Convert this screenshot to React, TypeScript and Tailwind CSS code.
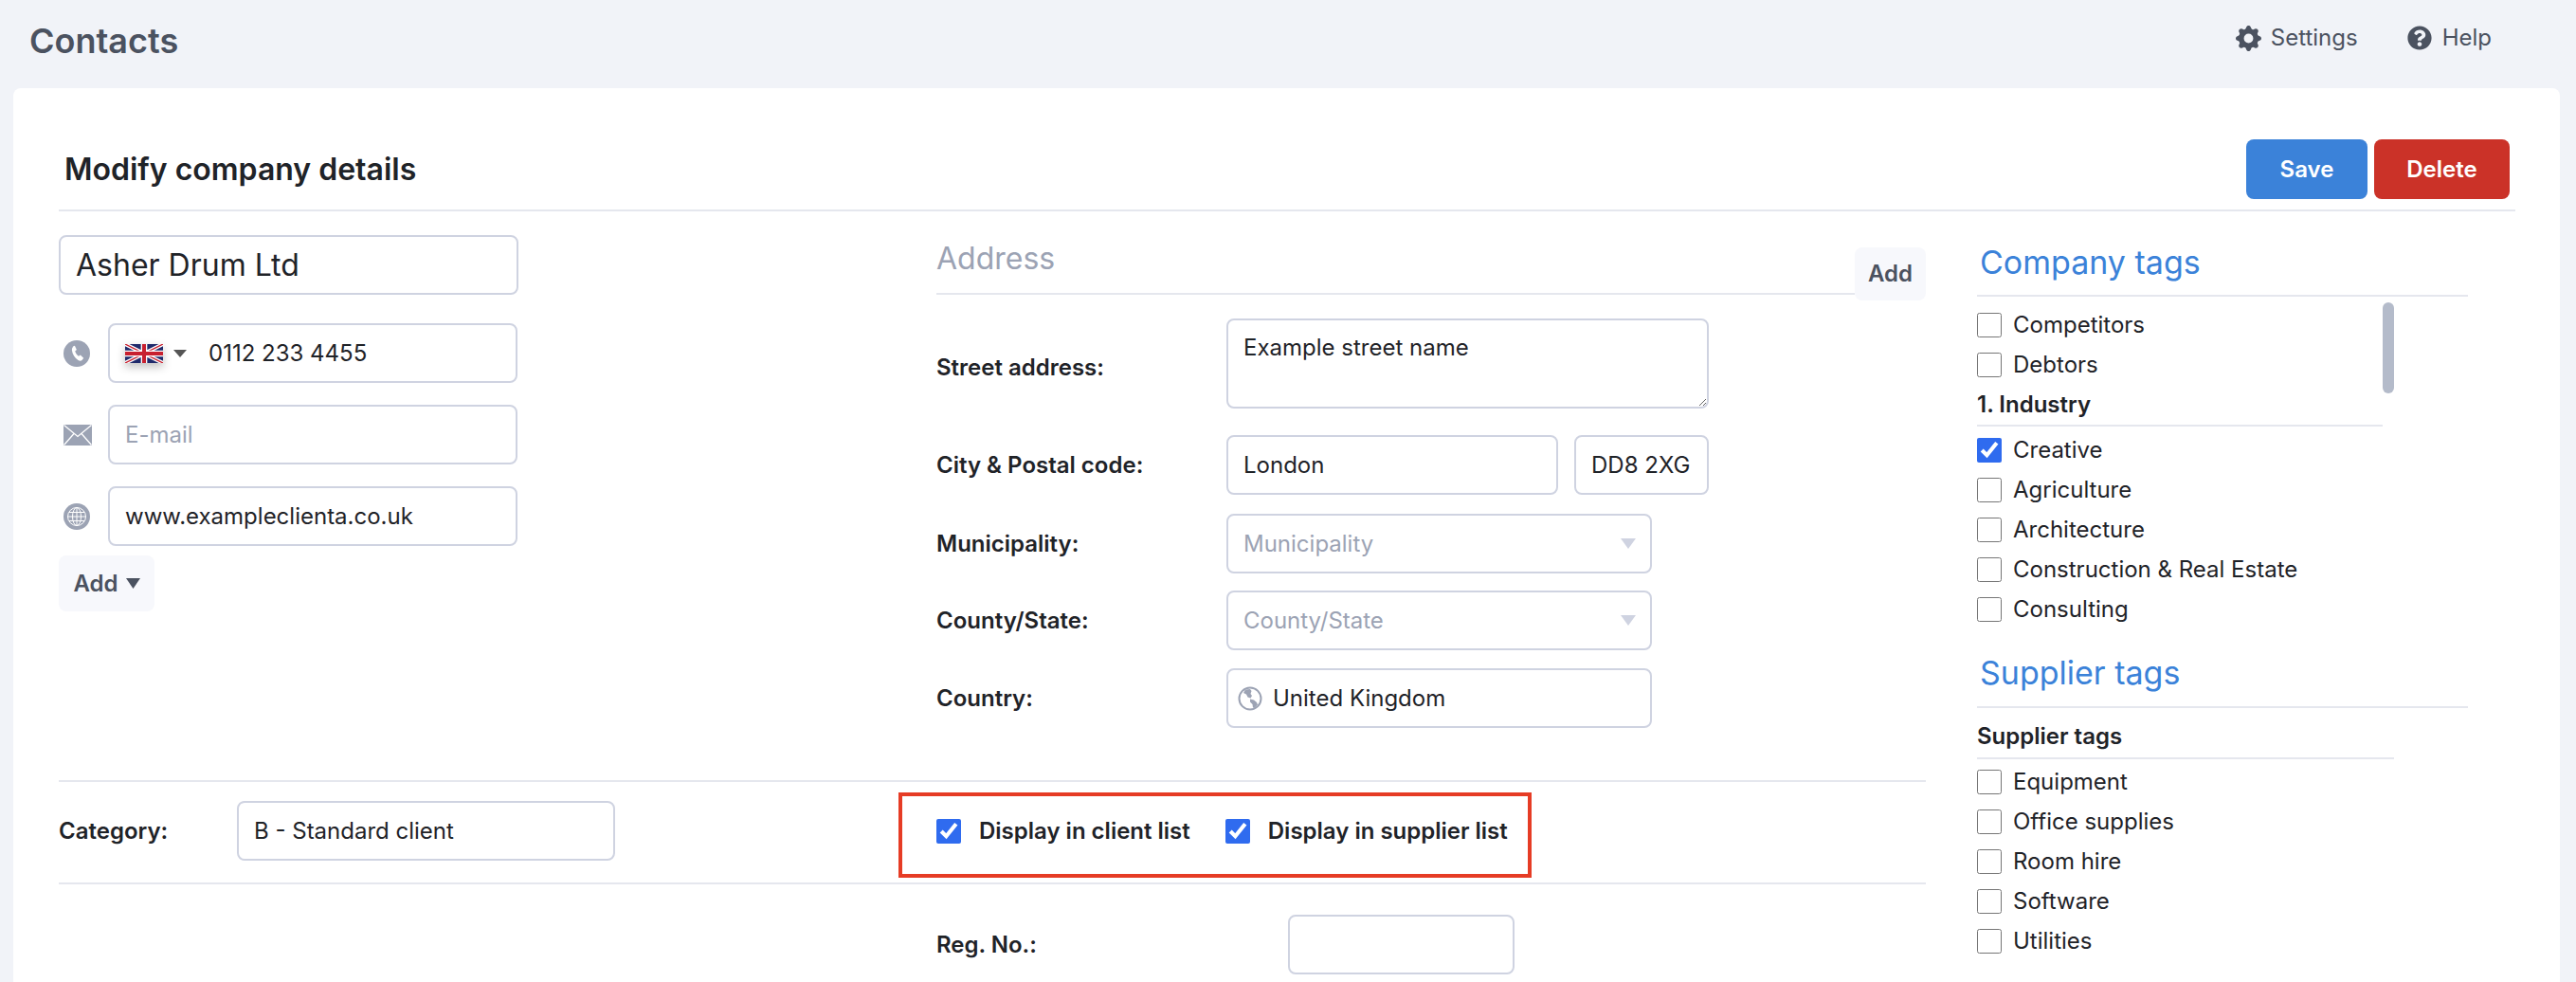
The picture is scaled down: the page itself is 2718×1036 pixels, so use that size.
import type { ReactNode } from "react";
import { BsGearFill } from "react-icons/bs";
import { FaQuestionCircle } from "react-icons/fa";

const INPUT =
  "h-[63px] rounded-[8px] border-2 border-[#cfd3e1] bg-white px-[16px] text-[24px] text-[#1f2328] outline-none placeholder:text-[#9ca3b4]";
const LABEL = "text-[24px] font-semibold text-[#1f2328]";

function UkFlag() {
  return (
    <svg viewBox="0 0 60 30" preserveAspectRatio="none" className="h-[20px] w-[40px] shadow-[0_4px_10px_rgba(0,0,0,0.25)]">
      <rect width="60" height="30" fill="#1f2a6b" />
      <path d="M0 0L60 30M60 0L0 30" stroke="#fff" strokeWidth="6" />
      <path d="M0 0L60 30M60 0L0 30" stroke="#c8202f" strokeWidth="2" />
      <path d="M30 0V30M0 15H60" stroke="#fff" strokeWidth="10" />
      <path d="M30 0V30M0 15H60" stroke="#c8202f" strokeWidth="6" />
    </svg>
  );
}

function PhoneIcon() {
  return (
    <svg viewBox="0 0 28 28" className="h-[28px] w-[28px]">
      <circle cx="14" cy="14" r="14" fill="#9ca3b4" />
      <path
        d="M9.5 6.5l2.4-.8 2 4.4-1.7 1.4c.6 2.2 2 4 3.8 5.2l1.8-1.2 3.4 3.3-1.7 2.2c-1 .9-2.6.8-4-.1-3.6-2.3-6-6-6.6-10.4-.1-1.9.6-3.3 1.600-4z"
        fill="#fff"
      />
    </svg>
  );
}

function MailIcon() {
  return (
    <svg viewBox="0 0 30 22" className="h-[22px] w-[30px]">
      <rect width="30" height="22" fill="#9ca3b4" />
      <path d="M0.5 0.5L15 12.500L29.500 0.5M0.5 21.500L11 9.500M29.500 21.500L19 9.500" fill="none" stroke="#fff" strokeWidth="1.300" />
    </svg>
  );
}

function WebIcon() {
  return (
    <svg viewBox="0 0 28 28" className="h-[28px] w-[28px]">
      <circle cx="14" cy="14" r="14" fill="#9ca3b4" />
      <g fill="none" stroke="#fff" strokeWidth="1">
        <circle cx="14" cy="14" r="9.500" />
        <ellipse cx="14" cy="14" rx="4.500" ry="9.500" />
        <path d="M14 4.500V23.500M4.500 14H23.500M6 9.500H22M6 18.500H22" />
      </g>
    </svg>
  );
}

function CountryGlobe() {
  return (
    <svg viewBox="0 0 26 26" className="h-[26px] w-[26px] shrink-0">
      <circle cx="13" cy="13" r="11.500" fill="none" stroke="#9ca3b4" strokeWidth="2" />
      <path
        d="M8 3.500l5-.5 1.500 2-1 3 1.500 2-1.500 2.500-3-1-1.500-3L6 7zM13 13.500l4 1 3 2.500 1 2.500-3.500 3.500-1.500-.5-.5-3.500-2.500-2.500z"
        fill="#9ca3b4"
      />
    </svg>
  );
}

function Caret({ className }: { className: string }) {
  return (
    <svg viewBox="0 0 12 8" preserveAspectRatio="none" className={className}>
      <path d="M0 0H12L6 8Z" fill="currentColor" />
    </svg>
  );
}

function Check({ label, checked }: { label: string; checked?: boolean }) {
  return (
    <label className="flex items-center gap-[12px]">
      <input
        type="checkbox"
        defaultChecked={checked}
        className="m-0 h-[26px] w-[26px] shrink-0 accent-[#2f6bef]"
      />
      <span className="text-[24px] text-[#1f2328]">{label}</span>
    </label>
  );
}

function TagRow({ label, checked }: { label: string; checked?: boolean }) {
  return (
    <div className="flex h-[42px] items-center">
      <Check label={label} checked={checked} />
    </div>
  );
}

function ContactRow({ icon, children }: { icon: ReactNode; children: ReactNode }) {
  return (
    <div className="flex items-center">
      <div className="flex w-[52px] justify-start pl-[5px]">{icon}</div>
      {children}
    </div>
  );
}

function FormRow({ label, children, labelClass }: { label: string; children: ReactNode; labelClass?: string }) {
  return (
    <div className="flex items-center">
      <span className={`w-[306px] shrink-0 ${LABEL} ${labelClass ?? ""}`}>{label}</span>
      {children}
    </div>
  );
}

function SelectBox({ placeholder }: { placeholder: string }) {
  return (
    <div className="flex h-[63px] w-[449px] items-center justify-between rounded-[8px] border-2 border-[#cfd3e1] bg-white pl-[16px] pr-[15px]">
      <span className="text-[24px] text-[#9ca3b4]">{placeholder}</span>
      <Caret className="h-[11px] w-[16px] text-[#cfd3e1]" />
    </div>
  );
}

export default function App() {
  return (
    <div className="h-[1036px] overflow-hidden bg-[#f1f3f8] font-[Inter,sans-serif]">
      <header className="flex h-[93px] items-start justify-between pl-[31px] pr-[89px]">
        <h1 className="pt-[18px] text-[36px] leading-[50px] font-semibold text-[#4b5260]">Contacts</h1>
        <nav className="flex items-center gap-[52px] pt-[21px] text-[24px] leading-[38px] text-[#4b5260]">
          <span className="flex items-center gap-[10px]">
            <BsGearFill className="h-[27px] w-[27px]" />
            Settings
          </span>
          <span className="flex items-center gap-[11px]">
            <FaQuestionCircle className="h-[26px] w-[26px]" />
            Help
          </span>
        </nav>
      </header>

      <main className="ml-[14px] mr-[17px] h-[943px] rounded-t-[8px] bg-white pl-[48px] pr-[47px] pt-[54px]">
        <div className="flex h-[76px] items-start justify-between border-b-2 border-[#e5e7ee] pl-[6px] pr-[6px]">
          <h2 className="text-[32px] leading-[63px] font-semibold text-[#1f2328]">Modify company details</h2>
          <div className="flex gap-[7px]">
            <button className="h-[63px] w-[128px] rounded-[8px] bg-[#3b82d9] text-[24px] font-semibold text-white">Save</button>
            <button className="h-[63px] w-[143px] rounded-[8px] bg-[#cb3228] text-[24px] font-semibold text-white">Delete</button>
          </div>
        </div>

        <div className="flex">
          <div className="w-[1970px] shrink-0">
            <div className="flex border-b-2 border-[#e5e7ee] pb-[55px]">
              <div className="w-[926px] shrink-0 pt-[25px]">
                <input defaultValue="Asher Drum Ltd" className={`${INPUT} w-[485px] text-[32px]`} />
                <div className="mt-[30px] flex flex-col gap-[23px]">
                  <ContactRow icon={<PhoneIcon />}>
                    <div className="flex h-[63px] w-[432px] items-center rounded-[8px] border-2 border-[#cfd3e1] bg-white pl-[16px]">
                      <UkFlag />
                      <Caret className="ml-[11px] h-[8px] w-[14px] text-[#555]" />
                      <span className="ml-[23px] text-[24px] text-[#1f2328]">0112 233 4455</span>
                    </div>
                  </ContactRow>
                  <ContactRow icon={<MailIcon />}>
                    <input placeholder="E-mail" className={`${INPUT} w-[432px]`} />
                  </ContactRow>
                  <ContactRow icon={<WebIcon />}>
                    <input defaultValue="www.exampleclienta.co.uk" className={`${INPUT} w-[432px]`} />
                  </ContactRow>
                </div>
                <button className="mt-[10px] flex h-[59px] w-[101px] items-center justify-center gap-[8px] rounded-[8px] bg-[#f7f8fc] text-[24px] font-semibold text-[#4b5260]">
                  Add
                  <Caret className="h-[11px] w-[15px]" />
                </button>
              </div>

              <div className="w-[1044px] pt-[38px]">
                <div className="flex items-start">
                  <div className="h-[50px] w-[969px] border-b-2 border-[#e5e7ee] text-[32px] leading-[24px] text-[#9ca3b4]">Address</div>
                  <button className="h-[56px] w-[75px] rounded-[8px] bg-[#f7f8fc] text-[24px] font-semibold text-[#4b5260]">Add</button>
                </div>
                <div className="mt-[19px] flex flex-col">
                  <FormRow label="Street address:" labelClass="pt-[9px]">
                    <textarea
                      defaultValue="Example street name"
                      className="block h-[95px] w-[509px] rounded-[8px] border-2 border-[#cfd3e1] bg-white px-[16px] py-[11px] text-[24px] text-[#1f2328] outline-none"
                    />
                  </FormRow>
                  <div className="mt-[28px]">
                    <FormRow label="City & Postal code:">
                      <input defaultValue="London" className={`${INPUT} w-[350px]`} />
                      <input defaultValue="DD8 2XG" className={`${INPUT} ml-[17px] w-[142px]`} />
                    </FormRow>
                  </div>
                  <div className="mt-[20px]">
                    <FormRow label="Municipality:">
                      <SelectBox placeholder="Municipality" />
                    </FormRow>
                  </div>
                  <div className="mt-[18px]">
                    <FormRow label="County/State:">
                      <SelectBox placeholder="County/State" />
                    </FormRow>
                  </div>
                  <div className="mt-[19px]">
                    <FormRow label="Country:">
                      <div className="flex h-[63px] w-[449px] items-center gap-[11px] rounded-[8px] border-2 border-[#cfd3e1] bg-white pl-[10px]">
                        <CountryGlobe />
                        <span className="text-[24px] text-[#1f2328]">United Kingdom</span>
                      </div>
                    </FormRow>
                  </div>
                </div>
              </div>
            </div>

            <div className="flex h-[108px] border-b-2 border-[#e5e7ee]">
              <div className="flex w-[886px] shrink-0 items-center pb-[3px]">
                <span className={`w-[188px] ${LABEL}`}>Category:</span>
                <input defaultValue="B - Standard client" className={`${INPUT} w-[399px]`} />
              </div>
              <div className="mt-[11px] flex h-[90px] w-[668px] items-center gap-[37px] border-4 border-[#e63c25] pb-[8px] pl-[36px]">
                <label className="flex items-center gap-[19px]">
                  <input type="checkbox" defaultChecked className="m-0 h-[26px] w-[26px] accent-[#2f6bef]" />
                  <span className={LABEL}>Display in client list</span>
                </label>
                <label className="flex items-center gap-[19px]">
                  <input type="checkbox" defaultChecked className="m-0 h-[26px] w-[26px] accent-[#2f6bef]" />
                  <span className={LABEL}>Display in supplier list</span>
                </label>
              </div>
            </div>

            <div className="ml-[926px] flex items-center pt-[32px]">
              <span className={`w-[371px] ${LABEL}`}>Reg. No.:</span>
              <input className={`${INPUT} w-[239px]`} />
            </div>
          </div>

          <aside className="ml-[54px] w-[518px] shrink-0">
            <h3 className="h-[90px] border-b-2 border-[#e5e7ee] pl-[3px] pt-[31px] text-[34px] leading-[46px] font-normal text-[#3b82d9]">Company tags</h3>
            <div className="relative w-[440px] pt-[9px]">
              <TagRow label="Competitors" />
              <TagRow label="Debtors" />
              <div className={`mr-[12px] h-[44px] border-b-2 border-[#e5e7ee] leading-[42px] ${LABEL}`}>1. Industry</div>
              <div className="pt-[4px]">
                <TagRow label="Creative" checked />
                <TagRow label="Agriculture" />
                <TagRow label="Architecture" />
                <TagRow label="Construction & Real Estate" />
                <TagRow label="Consulting" />
              </div>
              <div className="absolute right-0 top-[6px] h-[96px] w-[12px] rounded-full bg-[#b4bbca]" />
            </div>
            <h3 className="h-[83px] border-b-2 border-[#e5e7ee] pl-[3px] pt-[23px] text-[34px] leading-[46px] font-normal text-[#3b82d9]">Supplier tags</h3>
            <div className={`h-[54px] w-[440px] border-b-2 border-[#e5e7ee] pt-[9px] leading-[42px] ${LABEL}`}>Supplier tags</div>
            <div className="pt-[3px]">
              <TagRow label="Equipment" />
              <TagRow label="Office supplies" />
              <TagRow label="Room hire" />
              <TagRow label="Software" />
              <TagRow label="Utilities" />
            </div>
          </aside>
        </div>
      </main>
    </div>
  );
}
